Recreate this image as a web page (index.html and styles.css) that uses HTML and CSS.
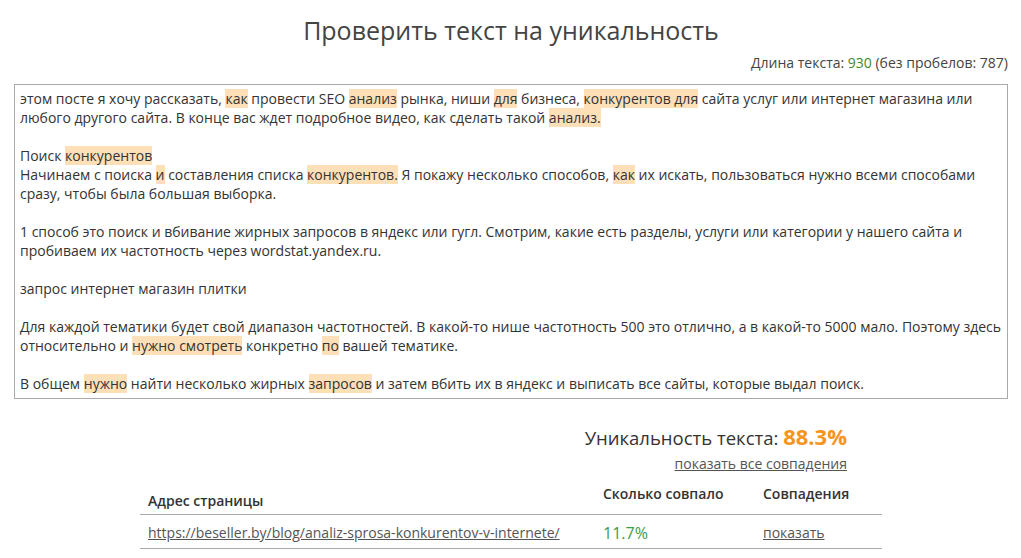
FILE: index.html
```html
<!DOCTYPE html>
<html lang="ru">
<head>
    <meta charset="UTF-8">
    <meta name="viewport" content="width=device-width, initial-scale=1.0">
    <title>Проверить текст на уникальность</title>
    <link rel="stylesheet" href="styles.css">
</head>
<body>
    <div class="page">
        <h1>Проверить текст на уникальность</h1>

        <div class="length">Длина текста: <span class="num">930</span> (без пробелов: 787)</div>

        <!-- Checked text with matches -->
        <div class="text-box">
            <p>этом посте я хочу рассказать, <mark>как</mark> провести SEO <mark>анализ</mark> рынка, ниши <mark>для</mark> бизнеса, <mark>конкурентов для</mark> сайта услуг или интернет магазина или любого другого сайта. В конце вас ждет подробное видео, как сделать такой <mark>анализ.</mark></p>
            <p>Поиск <mark>конкурентов</mark><br>Начинаем с поиска <mark>и</mark> составления списка <mark>конкурентов.</mark> Я покажу несколько способов, <mark>как</mark> их искать, пользоваться нужно всеми способами сразу, чтобы была большая выборка.</p>
            <p>1 способ это поиск и вбивание жирных запросов в яндекс или гугл. Смотрим, какие есть разделы, услуги или категории у нашего сайта и пробиваем их частотность через wordstat.yandex.ru.</p>
            <p>запрос интернет магазин плитки</p>
            <p>Для каждой тематики будет свой диапазон частотностей. В какой-то нише частотность 500 это отлично, а в какой-то 5000 мало. Поэтому здесь относительно и <mark>нужно смотреть</mark> конкретно <mark>по</mark> вашей тематике.</p>
            <p>В общем <mark>нужно</mark> найти несколько жирных <mark>запросов</mark> и затем вбить их в яндекс и выписать все сайты, которые выдал поиск.</p>
        </div>

        <!-- Result -->
        <div class="result">
            <div class="unique">Уникальность текста: <span class="percent">88.3%</span></div>
            <a href="#" class="all-link">показать все совпадения</a>
        </div>

        <table class="matches">
            <thead>
                <tr>
                    <th class="col-url">Адрес страницы</th>
                    <th class="col-num">Сколько совпало</th>
                    <th class="col-show">Совпадения</th>
                </tr>
            </thead>
            <tbody>
                <tr>
                    <td><a href="#">https://beseller.by/blog/analiz-sprosa-konkurentov-v-internete/</a></td>
                    <td class="match-val">11.7%</td>
                    <td><a href="#">показать</a></td>
                </tr>
            </tbody>
        </table>
    </div>
</body>
</html>
```

FILE: styles.css
```css
body {
    margin: 0;
    font-family: 'Open Sans', 'Liberation Sans', sans-serif;
    color: #333;
    background: #fff;
}
.page {
    padding: 0 13px 0 14px;
}
h1 {
    margin: 0;
    padding-top: 13px;
    font-size: 25px;
    font-weight: 400;
    line-height: 34px;
    color: #444;
    text-align: center;
}
.length {
    margin-top: 7px;
    font-size: 14px;
    line-height: 18px;
    text-align: right;
    color: #444;
}
.length .num {
    color: #3d8b2f;
}
.text-box {
    margin-top: 12px;
    border: 1px solid #aaa;
    padding: 4px 5px 5px;
    font-size: 14px;
    line-height: 19px;
    color: #333;
}
.text-box p {
    margin: 0 0 19px;
}
.text-box p:last-child {
    margin-bottom: 0;
}
mark {
    background: #fde0b8;
    color: inherit;
}
.result {
    width: 742px;
    margin: 23px auto 0;
    padding-right: 35px;
    box-sizing: border-box;
    text-align: right;
}
.unique {
    font-size: 18.5px;
    line-height: 28px;
    color: #333;
}
.percent {
    font-size: 22px;
    font-weight: 700;
    color: #f7941d;
}
.all-link {
    display: inline-block;
    font-size: 14px;
    line-height: 14px;
    color: #555;
}
.matches {
    width: 742px;
    margin: 10px auto 0;
    border-collapse: collapse;
    font-size: 14px;
    line-height: 20px;
}
.matches th {
    text-align: left;
    font-weight: 600;
    vertical-align: bottom;
    padding: 0 8px 3px;
    border-bottom: 1px solid #aaa;
}
.matches th.col-num,
.matches th.col-show {
    padding-bottom: 10px;
}
.col-url {
    width: 439px;
}
.col-num {
    width: 144px;
}
.matches td {
    padding: 8px 8px 5px;
    border-bottom: 1px solid #aaa;
}
.matches a {
    color: #555;
}
.match-val {
    font-size: 16px;
    color: #3a9d4a;
}
```
